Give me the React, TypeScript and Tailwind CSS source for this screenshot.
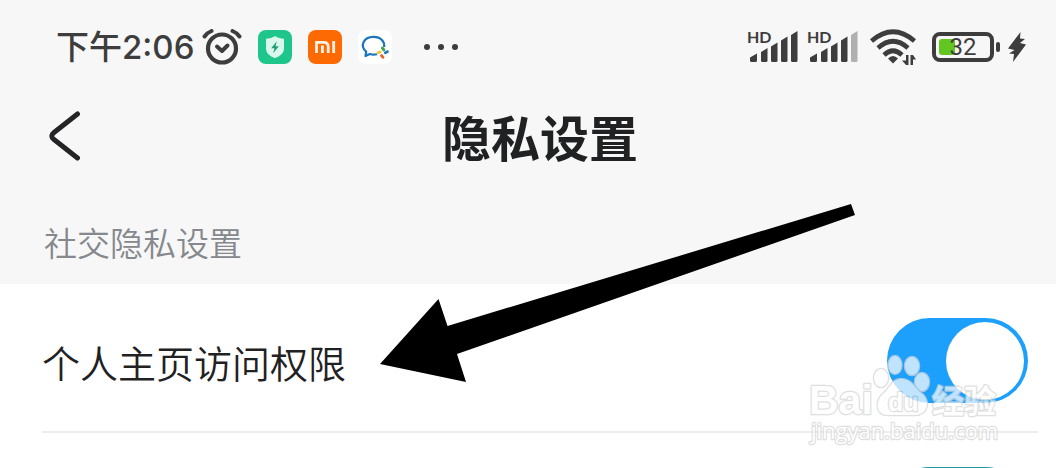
import { useState } from 'react'

const AlarmIcon = () => (
  <svg viewBox="0 0 40 36" className="h-9 w-10" fill="none" stroke="#3d3d3d" strokeLinecap="round">
    <circle cx="20" cy="19.500" r="14" strokeWidth="4.200" />
    <path d="M15 17.500l5 4.500 5.500-5.500" strokeWidth="4" strokeLinejoin="round" />
    <path d="M2.500 7.500q3-4 7-5.500M37.500 7.500q-3-4-7-5.500" strokeWidth="4" />
  </svg>
)

const ShieldIcon = () => (
  <svg viewBox="0 0 34 34" className="size-[34px]">
    <rect width="34" height="34" rx="8" fill="#1fc68c" />
    <path d="M17 6c3 2 5.500 2.500 9 2.800v9.500c0 4.700-3.500 7.700-9 10-5.500-2.300-9-5.300-9-10V8.800c3.500-.3 6-.8 9-2.800z" fill="#d9f7ec" />
    <path d="M18.800 11.200l-5.600 7h3.300l-1.300 5 5.600-7h-3.300z" fill="#1b9f70" />
  </svg>
)

const MiIcon = () => (
  <svg viewBox="0 0 34 34" className="size-[34px]">
    <rect width="34" height="34" rx="8" fill="#fd6a04" />
    <g fill="none" stroke="#fff1e3" strokeWidth="2.800">
      <path d="M8.500 23V12.400h7.500q4.200 0 4.200 4.200V23M14.400 15.500V23M25.700 11v12" />
    </g>
  </svg>
)

const ChatIcon = () => (
  <svg viewBox="0 0 34 34" className="size-[34px]">
    <rect width="34" height="34" rx="8" fill="#fff" />
    <path d="M19 24.300c-2.600.6-5.200.4-7.200-.3L7.500 26l.7-4.300C1.800 16.500 5 6.800 15.500 6.800c7.500 0 11.500 5 10.600 10.200" fill="none" stroke="#1a75bd" strokeWidth="2.200" strokeLinejoin="round" />
    <g strokeWidth="2.800" strokeLinecap="round" fill="none">
      <path d="M24.300 18l1.700 2" stroke="#3fa648" />
      <path d="M29.500 21.700l-2.200 1" stroke="#2279bd" />
      <path d="M25 27.300l-1.500-1.800" stroke="#e3672e" />
      <path d="M20 22.700l2.200-.7" stroke="#f3c62f" />
    </g>
  </svg>
)

const SignalIcon = ({ weak = false }: { weak?: boolean }) => (
  <svg viewBox="0 0 48 32" className="h-8 w-12" fill="#3d3d3d">
    <path d="M0 26.500l7-4v7q0 1.500-1.500 1.500h-4q-1.500 0-1.500-1.500z" />
    <path d="M11 21l6.500-4v12.500q0 1.500-1.500 1.500h-3.500q-1.500 0-1.500-1.500z" />
    <path d="M21 15.500l6.500-4v18q0 1.500-1.500 1.500h-3.500q-1.500 0-1.500-1.500z" />
    <path d="M31 9.500l6.500-4v24q0 1.500-1.500 1.500h-3.500q-1.500 0-1.500-1.500z" />
    <path d="M41 4l6.500-4v29.500q0 1.500-1.500 1.500h-3.500q-1.500 0-1.500-1.500z" fill={weak ? '#b0b0b0' : '#3d3d3d'} />
  </svg>
)

const Signal = ({ weak }: { weak?: boolean }) => (
  <div className="relative">
    <SignalIcon weak={weak} />
    <span className="absolute -top-1 -left-[3px] font-[Lato] text-base leading-5 font-bold">HD</span>
  </div>
)

const WifiIcon = () => (
  <svg viewBox="0 0 48 38" className="h-[38px] w-12" fill="none" stroke="#3d3d3d" strokeWidth="4.600">
    <path d="M1.500 13Q23 -5.500 44.500 13" />
    <path d="M8 20Q23 6.500 38 20" />
    <path d="M14 27Q23 18.500 32 27" />
    <path d="M18 30.500q5-5 10 0l-5 5z" fill="#3d3d3d" stroke="none" />
    <path d="M36 27h2.500v10H36l-4-4.500h4zM43 37h-2.500V27H43l3 4.500h-3z" fill="#3d3d3d" stroke="none" />
  </svg>
)

const BatteryIcon = () => (
  <div className="flex items-center gap-[2px]">
    <div className="relative h-[30px] w-[62px] rounded-lg border-4 border-[#3d3d3d]">
      <div className="absolute top-[3px] bottom-[3px] left-[3px] w-4 rounded-[3px] bg-[#62c622]" />
      <span className="absolute inset-0 flex items-center justify-center font-[Roboto] text-2xl leading-6">32</span>
    </div>
    <div className="h-[10px] w-1 rounded-full bg-[#3d3d3d]" />
  </div>
)

const ChargeIcon = () => (
  <svg viewBox="0 0 18 30" className="h-[30px] w-[18px]" fill="#3d3d3d">
    <path d="M12.500 0L0 16.500l6.500 1.500L1 21.500l5 .5-1 8L18 12.500 12 11l5-4-5-.5z" />
  </svg>
)

const StatusBar = () => (
  <div className="flex items-center justify-between pt-6 pr-[30px] pl-14 text-[#3d3d3d]">
    <div className="flex items-center">
      <span className="mr-2 font-[Inter,'Noto_Sans_CJK_SC',sans-serif] text-[33px] leading-[46px] font-medium">下午2:06</span>
      <AlarmIcon />
      <div className="ml-4 flex gap-4">
        <ShieldIcon />
        <MiIcon />
        <ChatIcon />
      </div>
      <div className="ml-8 flex gap-2">
        <span className="size-[6px] rounded-full bg-[#3d3d3d]" />
        <span className="size-[6px] rounded-full bg-[#3d3d3d]" />
        <span className="size-[6px] rounded-full bg-[#3d3d3d]" />
      </div>
    </div>
    <div className="flex items-center">
      <div className="mr-3 flex gap-3">
        <Signal />
        <Signal weak />
      </div>
      <WifiIcon />
      <div className="ml-[14px] flex items-center gap-2">
        <BatteryIcon />
        <ChargeIcon />
      </div>
    </div>
  </div>
)

interface SwitchRowProps {
  label?: string
  color: string
  last?: boolean
}

const SwitchRow = ({ label, color, last }: SwitchRowProps) => {
  const [checked, setChecked] = useState(true)

  return (
    <label className={`mr-[18px] ml-[42px] flex items-center justify-between pt-[34px] pr-[10px] pb-7 ${last ? '' : 'border-b-2 border-[#ededed]'}`}>
      <span className="pt-[2px] text-[38px] leading-[56px] font-[350] text-[#1f2122]">{label}</span>
      <input
        type="checkbox"
        role="switch"
        aria-label={label ?? '更多隐私设置'}
        checked={checked}
        onChange={(e) => setChecked(e.target.checked)}
        className={`flex h-[85px] w-[141px] shrink-0 appearance-none items-center rounded-full bg-gray-300 px-1 before:size-[78px] before:rounded-full before:bg-white checked:justify-end ${color}`}
      />
    </label>
  )
}

const Pointer = () => (
  <svg viewBox="0 0 476 180" className="pointer-events-none absolute top-[203px] left-[380px] w-[476px]">
    <path d="M0 161L58.500 96l9 27L471 1l4 11L77 151l9 28z" />
  </svg>
)

const Watermark = () => (
  <div className="pointer-events-none absolute top-[352px] left-[810px] w-[190px]">
    <svg viewBox="0 0 190 92" className="w-full overflow-visible">
      <g fill="#fff" stroke="#d4d4d4" strokeWidth="2.500" paintOrder="stroke" strokeLinejoin="round" opacity="0.72">
        <text x="-1" y="62" fontFamily="Liberation Sans" fontSize="41" fontWeight="700">Bai</text>
        <ellipse cx="71" cy="26" rx="7" ry="9" />
        <ellipse cx="85" cy="13" rx="6.500" ry="9" />
        <ellipse cx="102" cy="14" rx="7" ry="9" />
        <ellipse cx="112" cy="30" rx="7" ry="9" />
        <path d="M91 27c-9 0-11 9-17 14-9 7-9 22 4 22h27c13 0 16-15 6-22-7-6-10-14-20-14z" />
        <text x="78" y="59" fontFamily="Liberation Sans" fontSize="25" fontWeight="700">du</text>
        <text x="122" y="61" fontFamily="Noto Sans CJK SC" fontSize="32" fontWeight="700">经验</text>
        <text x="1" y="87" fontFamily="Open Sans" fontSize="22" fontWeight="500">jingyan.baidu.com</text>
      </g>
    </svg>
  </div>
)

export default function App() {
  return (
    <div className="relative h-screen overflow-hidden bg-white font-['Noto_Sans_CJK_SC',sans-serif]">
      <header className="bg-[#f7f7f7]">
        <StatusBar />
        <div className="grid grid-cols-[1fr_auto_1fr] items-center pt-[30px] pr-6 pl-12">
          <button type="button" aria-label="返回" className="w-8">
            <svg viewBox="0 0 32 50" className="w-8" fill="none" stroke="#222426" strokeWidth="5" strokeLinecap="round" strokeLinejoin="round">
              <path d="M29.500 3L6 21.500q-4.500 3.500 0 7L29.500 47" />
            </svg>
          </button>
          <h1 className="text-[49px] leading-[72px] font-bold text-[#1f2122]">隐私设置</h1>
        </div>
        <h2 className="pt-[46px] pb-[18px] pl-11 text-[33px] leading-[48px] font-[350] text-[#85888c]">社交隐私设置</h2>
      </header>
      <main>
        <SwitchRow label="个人主页访问权限" color="checked:bg-[#1d9ffc]" />
        <SwitchRow color="checked:bg-[#1f93a6]" last />
      </main>
      <Pointer />
      <Watermark />
    </div>
  )
}
